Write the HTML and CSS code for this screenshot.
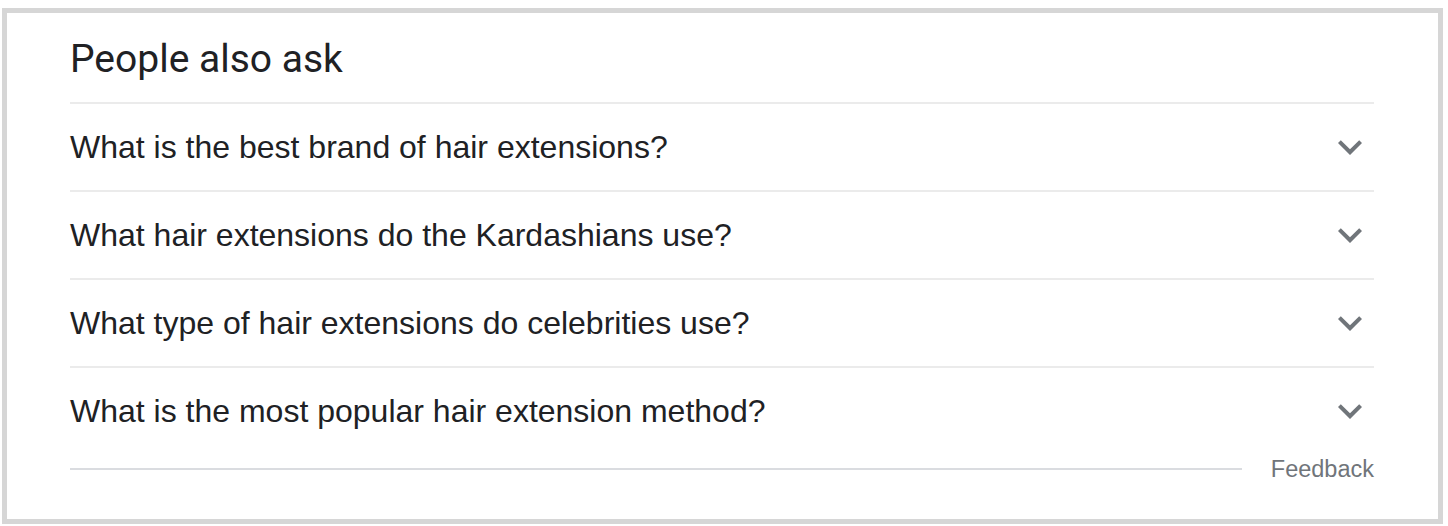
FILE: index.html
```html
<!DOCTYPE html>
<html lang="en">
<head>
<meta charset="utf-8">
<title>People also ask</title>
<link rel="stylesheet" href="styles.css">
</head>
<body>
<div class="paa">
  <h2 class="paa-title">People also ask</h2>
  <div class="paa-list">
    <div class="paa-row">
      <span class="paa-q">What is the best brand of hair extensions?</span>
      <svg class="paa-chev" viewBox="0 0 24 24" width="48" height="48"><path d="M16.59 8.59L12 13.17 7.41 8.59 6 10l6 6 6-6z"/></svg>
    </div>
    <div class="paa-row">
      <span class="paa-q">What hair extensions do the Kardashians use?</span>
      <svg class="paa-chev" viewBox="0 0 24 24" width="48" height="48"><path d="M16.59 8.59L12 13.17 7.41 8.59 6 10l6 6 6-6z"/></svg>
    </div>
    <div class="paa-row">
      <span class="paa-q">What type of hair extensions do celebrities use?</span>
      <svg class="paa-chev" viewBox="0 0 24 24" width="48" height="48"><path d="M16.59 8.59L12 13.17 7.41 8.59 6 10l6 6 6-6z"/></svg>
    </div>
    <div class="paa-row paa-row-last">
      <span class="paa-q">What is the most popular hair extension method?</span>
      <svg class="paa-chev" viewBox="0 0 24 24" width="48" height="48"><path d="M16.59 8.59L12 13.17 7.41 8.59 6 10l6 6 6-6z"/></svg>
    </div>
  </div>
  <div class="paa-feedback">
    <div class="paa-feedback-line"></div>
    <span class="paa-feedback-text">Feedback</span>
  </div>
</div>
</body>
</html>
```

FILE: styles.css
```css
html, body {
  margin: 0;
  padding: 0;
  background: #ffffff;
}

.paa {
  box-sizing: border-box;
  margin: 8px 0 0 2px;
  width: 1441px;
  height: 516px;
  border: 5px solid #d6d6d6;
  padding: 0 64px 0 63px;
  background: #ffffff;
  font-family: Arial, "Liberation Sans", sans-serif;
}

.paa-title {
  margin: 0;
  height: 91px;
  box-sizing: border-box;
  padding-top: 20px;
  font-family: Roboto, "Open Sans", sans-serif;
  font-weight: 400;
  font-size: 39px;
  line-height: 52px;
  color: #202124;
  border-bottom: 2px solid #ebebeb;
}

.paa-row {
  display: flex;
  align-items: center;
  justify-content: space-between;
  height: 86px;
  border-bottom: 2px solid #ebebeb;
}

.paa-row-last {
  border-bottom: none;
}

.paa-q {
  font-size: 32px;
  color: #202124;
  line-height: 40px;
}

.paa-chev {
  display: block;
  fill: #70757a;
}

.paa-feedback {
  display: flex;
  align-items: center;
  height: 30px;
  gap: 29px;
}

.paa-feedback-line {
  flex: 1;
  height: 2px;
  background: #dadce0;
}

.paa-feedback-text {
  font-size: 23.5px;
  color: #70757a;
  line-height: 30px;
}
```
